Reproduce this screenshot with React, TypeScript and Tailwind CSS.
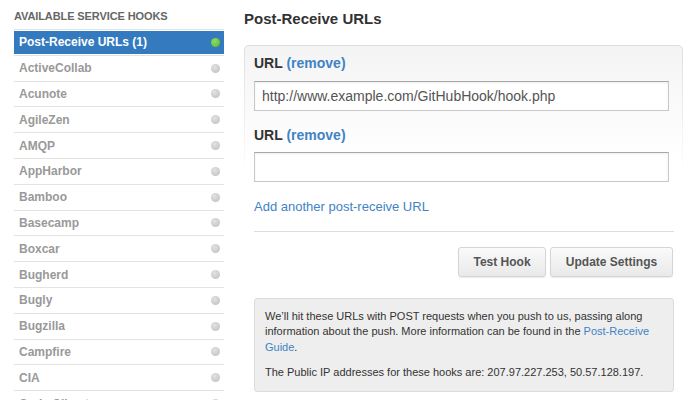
import React from "react";

const services = [
  "ActiveCollab",
  "Acunote",
  "AgileZen",
  "AMQP",
  "AppHarbor",
  "Bamboo",
  "Basecamp",
  "Boxcar",
  "Bugherd",
  "Bugly",
  "Bugzilla",
  "Campfire",
  "CIA",
  "Code Climate",
];

function Dot({ on }: { on?: boolean }) {
  return on ? (
    <span className="block w-[9px] h-[9px] rounded-full bg-[radial-gradient(circle_at_40%_35%,#8fdc5c,#5cb82f)]" />
  ) : (
    <span className="block w-[9px] h-[9px] rounded-full bg-[radial-gradient(circle_at_40%_35%,#e2e2e2,#bdbdbd)]" />
  );
}

export default function App() {
  return (
    <div
      className="w-[696px] h-[400px] overflow-hidden bg-white flex gap-[20px] pl-[14px]"
      style={{ fontFamily: '"Liberation Sans", Arial, Helvetica, sans-serif' }}
    >
      <div className="w-[210px] shrink-0 pt-[9px]">
        <h3 className="text-[11px] leading-[14px] font-bold text-[#666] mb-[6px] tracking-[-0.1px]">
          AVAILABLE SERVICE HOOKS
        </h3>
        <ul className="border-t border-[#e3e3e3]">
          <li className="h-[25.8px] border-b border-[#e3e3e3] py-px">
            <a className="h-full flex items-center justify-between pl-[5px] pr-[4px] bg-[#337abf] text-white text-[12px] font-bold">
              <span>Post-Receive URLs (1)</span>
              <Dot on />
            </a>
          </li>
          {services.map((s) => (
            <li key={s} className="h-[25.8px] border-b border-[#e3e3e3] py-px">
              <a className="h-full flex items-center justify-between pl-[5px] pr-[4px] text-[#999] text-[12px] font-bold">
                <span>{s}</span>
                <Dot />
              </a>
            </li>
          ))}
        </ul>
      </div>

      <div className="w-[439px] shrink-0 pt-[10px]">
        <h2 className="text-[15px] leading-[18px] font-bold text-[#333] mb-[17px]">Post-Receive URLs</h2>

        <div className="rounded-[5px] p-px pb-0 bg-[linear-gradient(to_bottom,#dedede,#ececec_60px,#ffffff_130px)]">
          <div className="rounded-[4px] bg-[linear-gradient(to_bottom,#f4f4f4,#fafafa_60px,#ffffff_110px)] pl-[9px] pr-[8px] pt-[7px]">
            <label className="block text-[14px] leading-[20px] font-bold text-[#333]">
              URL <span className="text-[#4183c4]">(remove)</span>
            </label>
            <input
              readOnly
              value="http://www.example.com/GitHubHook/hook.php"
              className="mt-[8px] block w-[415px] h-[30px] bg-white border border-[#c8c8c8] border-t-[#a8a8a8] shadow-[inset_0_1px_2px_rgba(0,0,0,0.08)] px-[7px] text-[14px] text-[#555] outline-none"
            />
            <label className="block mt-[14px] text-[14px] leading-[20px] font-bold text-[#333]">
              URL <span className="text-[#4183c4]">(remove)</span>
            </label>
            <input
              readOnly
              value=""
              className="mt-[7px] block w-[415px] h-[30px] bg-white border border-[#c8c8c8] border-t-[#a8a8a8] shadow-[inset_0_1px_2px_rgba(0,0,0,0.08)] px-[7px] text-[14px] text-[#555] outline-none"
            />
            <a className="block mt-[16px] text-[13px] leading-[18px] text-[#4183c4]">Add another post-receive URL</a>
            <div className="mt-[15px] w-[420px] border-t border-[#dddddd]" />
            <div className="w-[420px] flex justify-end gap-[4px] pt-[15px] pr-px">
              <button className="h-[30px] w-[88px] rounded-[3px] border border-[#d5d5d5] bg-[linear-gradient(to_bottom,#fafafa,#e9e9e9)] shadow-[0_1px_1px_rgba(0,0,0,0.08)] text-[12px] font-bold text-[#555]">
                Test Hook
              </button>
              <button className="h-[30px] w-[123px] rounded-[3px] border border-[#d5d5d5] bg-[linear-gradient(to_bottom,#fafafa,#e9e9e9)] shadow-[0_1px_1px_rgba(0,0,0,0.08)] text-[12px] font-bold text-[#555]">
                Update Settings
              </button>
            </div>
            <div className="mt-[21px] w-[420px] rounded-[3px] border border-[#dcdcdc] bg-[#eeeeee] p-[10px] text-[11px] leading-[15.4px] text-[#333]">
              <p className="mb-[10px]">
                We’ll hit these URLs with POST requests when you push to us, passing along information about the push. More
                information can be found in the <a className="text-[#4183c4]">Post-Receive Guide</a>.
              </p>
              <p>The Public IP addresses for these hooks are: 207.97.227.253, 50.57.128.197.</p>
            </div>
          </div>
        </div>
      </div>
    </div>
  );
}
